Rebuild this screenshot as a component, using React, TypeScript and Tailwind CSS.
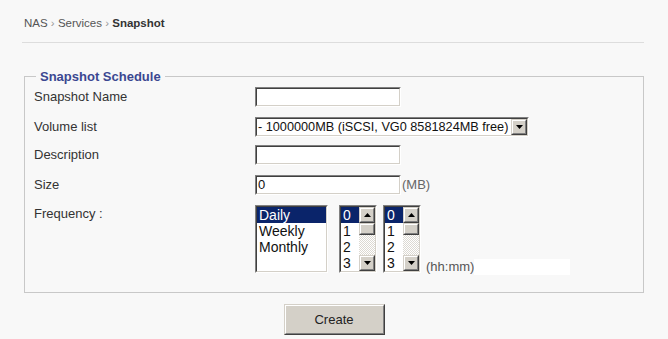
import React from "react";

function Inset({ className = "", innerClassName = "", children }: { className?: string; innerClassName?: string; children?: React.ReactNode }) {
  return (
    <div className={`border border-t-[#808080] border-l-[#808080] border-b-[#ffffff] border-r-[#ffffff] ${className}`}>
      <div className={`h-full w-full border border-t-[#404040] border-l-[#404040] border-b-[#d4d0c8] border-r-[#d4d0c8] bg-white ${innerClassName}`}>
        {children}
      </div>
    </div>
  );
}

function Raised({ className = "", children }: { className?: string; children?: React.ReactNode }) {
  return (
    <div className={`border border-t-[#d4d0c8] border-l-[#d4d0c8] border-b-[#404040] border-r-[#404040] bg-[#d4d0c8] ${className}`}>
      <div className="flex h-full w-full items-center justify-center border border-t-[#ffffff] border-l-[#ffffff] border-b-[#808080] border-r-[#808080]">
        {children}
      </div>
    </div>
  );
}

function Arrow({ up }: { up?: boolean }) {
  return (
    <svg width="7" height="4" viewBox="0 0 7 4" className="block">
      {up ? <polygon points="3.5,0 7,4 0,4" fill="#000" /> : <polygon points="0,0 7,0 3.5,4" fill="#000" />}
    </svg>
  );
}

function ScrollBar() {
  return (
    <div className="flex h-full w-[16px] flex-col">
      <Raised className="h-[16px] w-[16px] shrink-0">
        <Arrow up />
      </Raised>
      <Raised className="h-[12px] w-[16px] shrink-0" />
      <div className="flex-1 bg-[#eceae6] bg-[image:repeating-conic-gradient(#ffffff_0_25%,#dcd9d2_0_50%)] bg-[length:2px_2px]" />
      <Raised className="h-[16px] w-[16px] shrink-0">
        <Arrow />
      </Raised>
    </div>
  );
}

function ListBox({ items, width, scroll }: { items: string[]; width: string; scroll?: boolean }) {
  return (
    <Inset className={`${width} h-[68px] shrink-0`} innerClassName="flex overflow-hidden">
      <div className="flex-1 text-[14px] leading-[16px] text-[#111] font-['Liberation_Sans',Arial,sans-serif]">
        {items.map((it, i) => (
          <div key={it} className={`h-[16px] pl-[2px] whitespace-nowrap ${i === 0 ? "bg-[#0a246a] text-white" : ""}`}>
            {it}
          </div>
        ))}
      </div>
      {scroll && <ScrollBar />}
    </Inset>
  );
}

export default function App() {
  return (
    <div className="min-h-screen w-full bg-[#f8f8f8] font-['Liberation_Sans',Arial,sans-serif] text-[13px] text-[#333]">
      <div className="pl-[24px] pt-[16px] text-[11.5px] leading-[15px] text-[#555]">
        NAS <span className="text-[#999]">›</span> Services <span className="text-[#999]">›</span>{" "}
        <span className="font-bold text-[#333]">Snapshot</span>
      </div>
      <div className="ml-[22px] mt-[11px] h-px w-[622px] bg-[#dddddd]" />

      <fieldset className="ml-[24px] mt-[26px] w-[620px] border border-[#c8c8c8] px-[9px] pb-[17px] pt-[3px]">
        <legend className="ml-[2px] px-[4px] text-[13px] font-bold leading-[15px] text-[#3b4791]">Snapshot Schedule</legend>

        <div className="flex h-[20px] items-center">
          <div className="w-[221px] shrink-0 leading-[16px]">Snapshot Name</div>
          <Inset className="h-[20px] w-[146px]" />
        </div>

        <div className="mt-[10px] flex h-[20px] items-center">
          <div className="w-[221px] shrink-0 leading-[16px]">Volume list</div>
          <Inset className="h-[20px] w-[274px]" innerClassName="flex items-center">
            <div className="flex-1 overflow-hidden whitespace-nowrap pl-[1px] text-[12.7px] leading-[16px] text-[#111]">
              - 1000000MB (iSCSI, VG0 8581824MB free)
            </div>
            <Raised className="h-[16px] w-[16px] shrink-0">
              <Arrow />
            </Raised>
          </Inset>
        </div>

        <div className="mt-[8px] flex h-[20px] items-center">
          <div className="w-[221px] shrink-0 leading-[16px]">Description</div>
          <Inset className="h-[20px] w-[146px]" />
        </div>

        <div className="mt-[10px] flex h-[20px] items-center">
          <div className="w-[221px] shrink-0 leading-[16px]">Size</div>
          <Inset className="h-[20px] w-[146px]" innerClassName="flex items-center">
            <span className="pl-[1px] text-[13px] leading-[16px] text-[#111]">0</span>
          </Inset>
          <span className="ml-[1px] text-[#666]">(MB)</span>
        </div>

        <div className="mt-[10px] flex items-start">
          <div className="mt-[1px] w-[221px] shrink-0 leading-[16px]">Frequency :</div>
          <ListBox items={["Daily", "Weekly", "Monthly"]} width="w-[73px]" />
          <div className="ml-[11px]">
            <ListBox items={["0", "1", "2", "3"]} width="w-[38px]" scroll />
          </div>
          <div className="ml-[6px]">
            <ListBox items={["0", "1", "2", "3"]} width="w-[38px]" scroll />
          </div>
          <div className="ml-[5px] mt-[53px] flex h-[17px] items-center">
            <span className="leading-[16px] text-[#555]">(hh:mm)</span>
            <div className="h-[16px] w-[96px] bg-white" />
          </div>
        </div>
      </fieldset>

      <div className="ml-[24px] mt-[11px] flex w-[620px] justify-center">
        <Raised className="h-[31px] w-[101px]">
          <span className="text-[13px] text-[#222]">Create</span>
        </Raised>
      </div>
    </div>
  );
}
